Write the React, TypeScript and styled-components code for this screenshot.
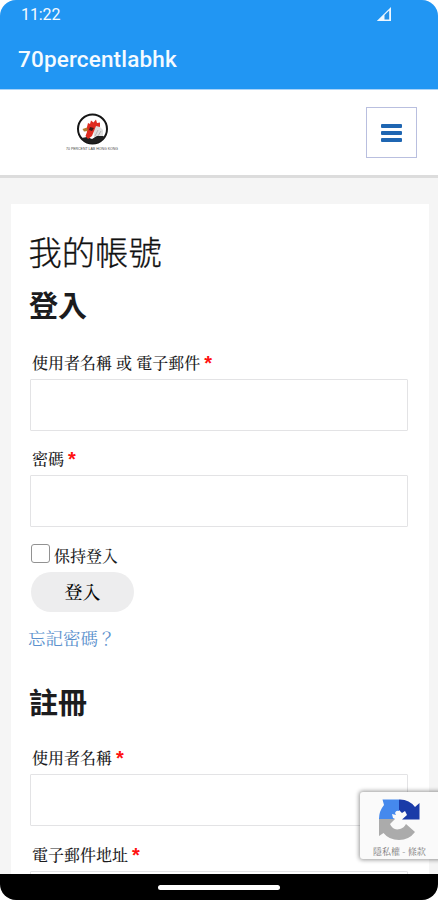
import React from "react";
import styled, { createGlobalStyle } from "styled-components";

const GlobalStyle = createGlobalStyle`
  * { box-sizing: border-box; }
  html, body { margin: 0; padding: 0; background: #fff; overflow: hidden; }
`;

const cjk = `"Noto Serif CJK TC", "Noto Sans CJK TC", serif`;

const Screen = styled.div`
  width: 438px;
  height: 900px;
  border-radius: 16px;
  overflow: hidden;
  display: flex;
  flex-direction: column;
  position: relative;
  background: #f5f5f5;
  font-family: ${cjk};
  color: #1c1c1e;
`;

const AppHeader = styled.header`
  flex: none;
  height: 90px;
  background: #2196f3;
  border-bottom: 1px solid #a9d3f8;
  color: #f4faff;
  font-family: Roboto, sans-serif;
`;

const StatusBar = styled.div`
  height: 30px;
  display: flex;
  justify-content: space-between;
  padding: 0 46px 0 21px;
  font-size: 16px;
  line-height: 29px;
  letter-spacing: -0.1px;
  svg { margin-top: 6px; }
`;

const AppTitle = styled.div`
  padding-left: 18px;
  font-size: 22.5px;
  letter-spacing: 0.16px;
  font-weight: 500;
  line-height: 58px;
`;

const SiteBar = styled.nav`
  flex: none;
  height: 88px;
  background: #fff;
  border-bottom: 3px solid #dcdcdc;
  display: flex;
  justify-content: space-between;
  align-items: center;
  padding: 0 21px 0 65px;
`;

const MenuButton = styled.button`
  width: 51px;
  height: 51px;
  padding: 0;
  border: 1px solid #b9bfdf;
  background: #fff;
  display: flex;
  flex-direction: column;
  align-items: center;
  justify-content: center;
  gap: 3px;
`;

const MenuBar = styled.span`
  width: 21px;
  height: 4px;
  border-radius: 1px;
  background: #1f66b2;
`;

const Content = styled.main`
  flex: 1;
  min-height: 0;
  overflow: hidden;
  padding: 26px 9px 0 11px;
`;

const Card = styled.section`
  background: #fff;
  padding: 26px 21px 0 19px;
  height: 760px;
`;

const PageHeading = styled.h1`
  margin: 0 0 0 -1.5px;
  height: 44px;
  font: 300 33.3px/42px "Noto Sans CJK TC", sans-serif;
  color: #111;
  -webkit-text-stroke: 0.3px #111;
`;

const SectionHeading = styled.h2<{ $top: number }>`
  margin: ${(p) => p.$top}px 0 0 -1px;
  font: 700 29px/38px "Noto Sans CJK TC", sans-serif;
  height: 40px;
`;

const Label = styled.label<{ $top: number }>`
  display: block;
  margin-top: ${(p) => p.$top}px;
  padding-left: 2px;
  height: 24px;
  font-size: 16px;
  font-weight: 500;
  line-height: 24px;
  white-space: pre;
`;

const Required = styled.span`
  color: #f11;
  font-family: "Liberation Sans", sans-serif;
  font-weight: 700;
  font-size: 20px;
  line-height: 16px;
  vertical-align: -1px;
`;

const Field = styled.input`
  display: block;
  width: 378px;
  height: 52px;
  margin: 4px 0 0;
  border: 1px solid #e3e3e5;
  border-radius: 1px;
  background: #fff;
`;

const Remember = styled.label`
  display: flex;
  align-items: center;
  gap: 4px;
  height: 24px;
  margin-top: 14px;
  font-size: 16px;
  font-weight: 500;
  line-height: 24px;
  padding-left: 1px;
`;

const RememberText = styled.span`
  padding-top: 5px;
`;

const Checkbox = styled.input`
  appearance: none;
  width: 19px;
  height: 19px;
  margin: 0;
  border: 1.5px solid #929292;
  border-radius: 3px;
  background: #fff;
`;

const Submit = styled.button`
  display: block;
  width: 103px;
  height: 40px;
  margin: 7px 0 0 1px;
  padding: 0 0 2px;
  border: 0;
  border-radius: 20px;
  background: #ededee;
  color: #050505;
  font: 500 18px/36px ${cjk};
`;

const Forgot = styled.a`
  display: block;
  margin: 13px 0 0 -2px;
  height: 26px;
  font-size: 17.5px;
  line-height: 26px;
  color: #5c91cd;
`;

const Badge = styled.aside`
  position: absolute;
  left: 360px;
  top: 792px;
  width: 84px;
  height: 67px;
  border-radius: 3px;
  background: #fafafa;
  box-shadow: 0 0 4px 1px rgba(0, 0, 0, 0.4);
  padding: 6px 10px 0 13px;
`;

const BadgeText = styled.div`
  margin-top: 4px;
  width: 64px;
  font-size: 9px;
  line-height: 14px;
  color: #777;
  white-space: nowrap;
`;

const BadgeIcon = styled.svg`
  display: block;
  margin-left: 5px;
`;

const LogoSvg = styled.svg`
  overflow: visible;
`;

const SystemBar = styled.footer`
  flex: none;
  height: 26px;
  background: #000;
  display: flex;
  align-items: center;
  justify-content: center;
`;

const Handle = styled.div`
  width: 122px;
  height: 5px;
  border-radius: 3px;
  background: #fff;
`;

const Signal = () => (
  <svg width="16" height="16" viewBox="0 0 16 16">
    <path d="M0.8 15 L15 1 V15 Z" fill="#edf7ff" />
    <path d="M8.5 13.4 V9 L13.2 4.6 V13.4 Z" fill="#2590e8" />
  </svg>
);

const RoosterLogo = () => (
  <LogoSvg width="54" height="42" viewBox="0 -2 54 42">
    <circle cx="27.5" cy="15" r="14.5" fill="#fff" stroke="#161616" strokeWidth="2" />
    <path d="M28 10 L34 12 L38 16 L38 24 H29 Z" fill="#dedede" />
    <path d="M16.5 24 L22 23 L27 25 L32 22 L38 22 L39.5 23 Q34 29.5 27.5 29.5 Q20 29.5 16.5 24Z" fill="#202020" />
    <path d="M22 13 L23 9 L25 10 L26 6.5 L28.5 8.5 L31 5.5 L32 9 L35 8.5 L35 13 L31 12 L29 17 L27 22 L23 25 L20.5 22 L22 18 Z" fill="#df2b20" />
    <path d="M17.5 15 L22 13.5 L23 17 L19 17.5Z" fill="#b57b2f" />
    <path d="M25 13 L29 14 L27 17 L24 16Z" fill="#401814" />
    <path d="M33 16 L30 22 M36 17 L33 22" stroke="#aaa" strokeWidth=".8" />
    <text x="1" y="35.5" textLength="52" lengthAdjust="spacingAndGlyphs" fontFamily="Liberation Sans" fontSize="3.6" fill="#444">70 PERCENT LAB HONG KONG</text>
  </LogoSvg>
);

const Recaptcha = () => (
  <BadgeIcon width="42" height="43" viewBox="0 0 42 43">
    <path d="M21 1.5 V13 Q18 12 17 15 L18 17 L14 16 L15 20 L17 21 H1 Q1 13 6 7 L4.5 1.5 H12Z" fill="#4589ed" />
    <path d="M21 1.5 Q31 1 37 9 L41.5 5 V21.5 H24 L29 17 L27 13 L24 15 L21 12Z" fill="#1a3ba8" />
    <path d="M1 21 H17 L12 26 Q15 33 22 31 Q26 30 28 26 L37 34 Q31 42 21 42 Q11 42 5.5 35 L1 38Z" fill="#ababab" />
  </BadgeIcon>
);

export default function App() {
  return (
    <>
      <GlobalStyle />
      <Screen>
        <AppHeader>
          <StatusBar>
            <span>11:22</span>
            <Signal />
          </StatusBar>
          <AppTitle>70percentlabhk</AppTitle>
        </AppHeader>
        <SiteBar>
          <RoosterLogo />
          <MenuButton aria-label="Menu">
            <MenuBar />
            <MenuBar />
            <MenuBar />
          </MenuButton>
        </SiteBar>
        <Content>
          <Card>
            <PageHeading>我的帳號</PageHeading>
            <SectionHeading $top={11}>登入</SectionHeading>
            <Label $top={26}>使用者名稱 或 電子郵件 <Required>*</Required></Label>
            <Field type="text" />
            <Label $top={16}>密碼 <Required>*</Required></Label>
            <Field type="password" />
            <Remember>
              <Checkbox type="checkbox" />
              <RememberText>保持登入</RememberText>
            </Remember>
            <Submit>登入</Submit>
            <Forgot>忘記密碼？</Forgot>
            <SectionHeading $top={31}>註冊</SectionHeading>
            <Label $top={24}>使用者名稱 <Required>*</Required></Label>
            <Field type="text" />
            <Label $top={17}>電子郵件地址 <Required>*</Required></Label>
            <Field type="email" />
          </Card>
        </Content>
        <Badge>
          <Recaptcha />
          <BadgeText>隱私權 - 條款</BadgeText>
        </Badge>
        <SystemBar>
          <Handle />
        </SystemBar>
      </Screen>
    </>
  );
}
